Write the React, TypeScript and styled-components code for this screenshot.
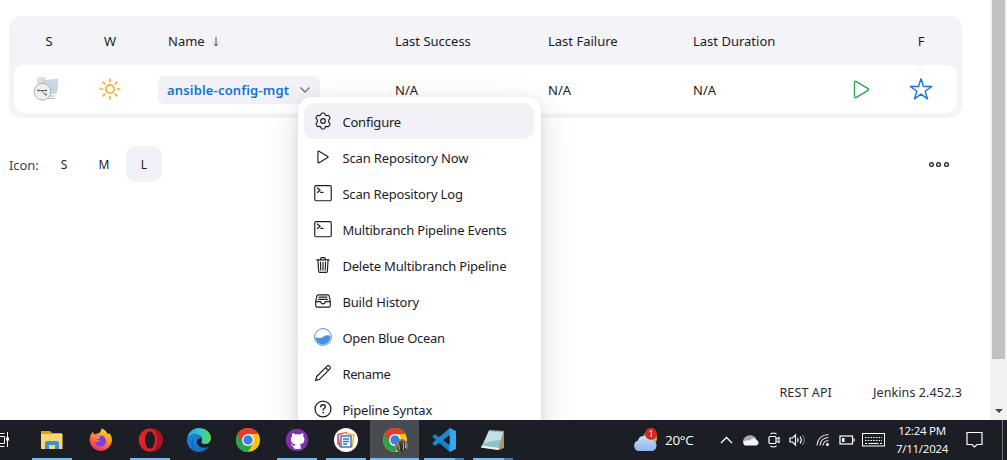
import React from "react";
import styled, { createGlobalStyle } from "styled-components";

const Global = createGlobalStyle`
  * { box-sizing: border-box; }
  body { margin: 0; background: #fff; overflow: hidden; }
  svg { display: block; flex: none; }
`;

const Screen = styled.div`
  width: 1007px;
  height: 460px;
  display: flex;
  flex-direction: column;
  font-family: "Noto Sans", "Open Sans", sans-serif;
  font-size: 13px;
  color: #1c1c27;
`;

const Viewport = styled.div`
  position: relative;
  height: 420px;
  display: flex;
  overflow: hidden;
`;

const Page = styled.main`
  width: 990px;
  padding: 16px 28px 0 9px;
  display: flex;
  flex-direction: column;
`;

const Label = styled.span<{ $ls?: number }>`
  letter-spacing: ${(p) => p.$ls ?? 0}px;
  white-space: nowrap;
`;

const Table = styled.section`
  height: 102px;
  padding: 0 5px 5px;
  border-radius: 13px;
  background: #f3f3f8;
`;

const Row = styled.div`
  display: grid;
  grid-template-columns: 70px 52px 259px 153px 145px 138px 60px 60px;
  align-items: center;
`;

const HeadRow = styled(Row)`
  height: 49px;
  padding-top: 1px;
`;

const JobRow = styled(Row)`
  height: 48px;
  background: #fff;
  border-radius: 10px;
`;

const Cell = styled.div<{ $center?: boolean; $pad?: number; $drop?: number }>`
  display: flex;
  align-items: center;
  justify-content: ${(p) => (p.$center ? "center" : "flex-start")};
  padding-left: ${(p) => p.$pad ?? 0}px;
  padding-top: ${(p) => p.$drop ?? 0}px;
`;

const SortArrow = styled.svg`
  margin: 1px 0 0 8px;
`;

const JobLink = styled.a`
  display: flex;
  align-items: center;
  width: 162px;
  height: 28px;
  padding: 0 9px 0 9px;
  justify-content: space-between;
  border-radius: 6px;
  background: #f1f1f7;
  color: #1272dc;
  font-weight: 600;
`;

const SizeBar = styled.div`
  margin-top: 28px;
  height: 36px;
  display: flex;
  align-items: center;
`;

const Caption = styled.span`
  width: 37px;
  color: #40404c;
  white-space: nowrap;
  letter-spacing: -0.1px;
  padding-top: 1px;
`;

const SizeButton = styled.span<{ $active?: boolean }>`
  width: 36px;
  height: 36px;
  margin-right: 4px;
  display: flex;
  align-items: center;
  justify-content: center;
  border-radius: 10px;
  font-size: 12px;
  background: ${(p) => (p.$active ? "#f1f1f7" : "transparent")};
`;

const More = styled.div`
  margin-left: auto;
  margin-right: 12px;
`;

const Footer = styled.footer`
  margin-top: auto;
  height: 54px;
  padding-top: 18px;
  display: flex;
  justify-content: flex-end;
  gap: 41px;
  font-size: 12.5px;
  color: #2a2a35;
`;

const Scrollbar = styled.div`
  width: 17px;
  height: 420px;
  background: #f1f1f1;
  display: flex;
  flex-direction: column;
  align-items: center;
`;

const Thumb = styled.div`
  width: 13px;
  height: 359px;
  background: #c1c1c1;
`;

const ArrowDown = styled.div`
  margin-top: 50px;
  border: 4px solid transparent;
  border-top-color: #444;
  border-bottom: 0;
`;

const Menu = styled.nav`
  position: absolute;
  left: 298px;
  top: 97px;
  width: 243px;
  height: 372px;
  padding: 6px 7px 6px 6px;
  border-radius: 14px;
  background: #fff;
  box-shadow: 0 10px 34px rgba(0, 0, 15, 0.14), 0 2px 8px rgba(0, 0, 15, 0.08);
`;

const MenuItem = styled.a<{ $active?: boolean }>`
  height: 36px;
  padding-left: 10px;
  display: flex;
  align-items: center;
  gap: 10.4px;
  border-radius: 10px;
  background: ${(p) => (p.$active ? "#f1f1f7" : "transparent")};
  ${Label} { padding-top: 2px; }
`;

const Taskbar = styled.div`
  height: 40px;
  display: flex;
  background: #1b1f25;
  color: #fff;
  overflow: hidden;
`;

const TaskView = styled.div`
  width: 27px;
  display: flex;
  align-items: center;
`;

const TaskButton = styled.div<{ $active?: boolean }>`
  width: 49px;
  height: 40px;
  display: flex;
  flex-direction: column;
  align-items: center;
  justify-content: space-between;
  padding-top: 7px;
  background: ${(p) => (p.$active ? "#484c51" : "transparent")};
`;

const Underline = styled.div<{ $w: number; $split?: boolean }>`
  width: ${(p) => p.$w}px;
  height: 2px;
  background: ${(p) =>
    p.$split ? "linear-gradient(90deg, #76b9ed 78%, #4a7ba6 78%)" : "#76b9ed"};
`;

const Tray = styled.div`
  margin-left: auto;
  width: 375px;
  display: flex;
  align-items: center;
  font-family: "Open Sans", "Noto Sans", sans-serif;
`;

const TraySlot = styled.div<{ $w: number; $pad?: number }>`
  width: ${(p) => p.$w}px;
  padding-left: ${(p) => p.$pad ?? 0}px;
  display: flex;
  align-items: center;
  flex: none;
`;

const Temperature = styled.span`
  font-size: 13.5px;
  letter-spacing: -0.3px;
  white-space: nowrap;
`;

const Clock = styled.div`
  width: 54px;
  height: 36px;
  display: flex;
  flex-direction: column;
  align-items: center;
  font-size: 11.5px;
  line-height: 17.5px;
  white-space: nowrap;
  letter-spacing: -0.25px;
`;

const ShowDesktop = styled.div`
  margin-left: auto;
  width: 5px;
  height: 40px;
  border-left: 1px solid #777b80;
`;

const line = {
  fill: "none",
  stroke: "currentColor",
  strokeLinecap: "round" as const,
  strokeLinejoin: "round" as const,
};

const MenuSvg = ({ children }: { children: React.ReactNode }) => (
  <svg width="18" height="18" viewBox="0 0 512 512" {...line} strokeWidth="33">
    {children}
  </svg>
);

const Gear = () => (
  <MenuSvg>
    <path d="M200 66Q206 28 228 28h56q22 0 28 38 6 20 24 30 20 10 38 4 36-14 48 6l30 52q12 20-16 44-18 14-18 34v40q0 20 18 34 28 24 16 44l-30 52q-12 20-48 6-18-6-38 4-18 10-24 30-6 38-28 38h-56q-22 0-28-38-6-20-24-30-20-10-38-4-36 14-48-6l-30-52q-12-20 16-44 18-14 18-34v-40q0-20-18-34-28-24-16-44l30-52q12-20 48-6 18 6 38-4 18-10 24-30z" />
    <circle cx="256" cy="256" r="66" />
  </MenuSvg>
);

const PlayPath = "M112 111v290c0 17.44 17 28.52 31 20.16l247.9-148.37c12.12-7.25 12.12-26.33 0-33.58L143 90.84c-14-8.36-31 2.72-31 20.16z";
const Play = () => (
  <MenuSvg><path d={PlayPath} /></MenuSvg>
);

const Terminal = () => (
  <MenuSvg>
    <rect x="22" y="46" width="468" height="430" rx="34" />
    <path d="M96 112l80 64-80 64M192 240h64" />
  </MenuSvg>
);

const Trash = () => (
  <MenuSvg>
    <path d="M112 112l20 320c.95 18.49 14.4 32 32 32h184c17.67 0 30.87-13.51 32-32l20-320M80 112h352M192 112V72a23.93 23.93 0 0 1 24-24h80a23.93 23.93 0 0 1 24 24v40M256 176v224M184 176l8 224M328 176l-8 224" />
  </MenuSvg>
);

const Archive = () => (
  <MenuSvg>
    <path d="M384 80H128c-26 0-43 14-48 40L48 272v112a48 48 0 0 0 48 48h320a48 48 0 0 0 48-48V272l-32-152c-5-27-23-40-48-40zM48 272h144M320 272h144M192 272a64 64 0 0 0 128 0M144 144h224M128 208h256" />
  </MenuSvg>
);

const BlueOcean = () => (
  <svg width="18" height="18" viewBox="0 0 18 18">
    <circle cx="9" cy="9" r="8.4" fill="#fff" stroke="#4a90e2" strokeWidth="1" />
    <path d="M1.6 9.2c2.2.2 3.6 1.3 5.7.6C9.5 9 10.500 7.300 13.300 7.300c1.500 0 2.200.5 3 .8C16.800 13 13.400 16.500 9 16.500S1.600 13 1.600 9.200z" fill="#4a90e2" />
  </svg>
);

const Pencil = () => (
  <MenuSvg>
    <path d="M44 468l32-112L366 66c22-22 50-28 72-6l14 14c22 22 16 50-6 72L156 436zM328 104l80 80" />
  </MenuSvg>
);

const Help = () => (
  <MenuSvg>
    <circle cx="256" cy="256" r="226" strokeWidth="36" />
    <path d="M190 196s2-60 68-60c40 0 64 24 64 54 0 52-64 50-64 98" strokeWidth="38" />
    <circle cx="257" cy="360" r="12" fill="currentColor" strokeWidth="24" />
  </MenuSvg>
);

const Sun = () => (
  <svg width="22" height="22" viewBox="0 0 22 22" fill="none" stroke="#f7b02e" strokeWidth="1.7" strokeLinecap="round">
    <circle cx="11" cy="11" r="4.2" />
    <path d="M11 1.200v2.400M11 18.400v2.400M1.200 11h2.400M18.400 11h2.400M4.100 4.100l1.700 1.700M16.200 16.200l1.700 1.700M4.100 17.900l1.700-1.700M16.200 5.800l1.700-1.700" />
  </svg>
);

const ProjectIcon = () => (
  <svg width="26" height="26" viewBox="0 0 26 26">
    <path d="M4 1h9v3h11v14H4z" fill="#dfe1e2" />
    <path d="M9 5l16-2-1 13-15 2z" fill="#cdd9e3" stroke="#c2cbd2" strokeWidth=".6" />
    <path d="M11 7l12-1-1 9-11 1z" fill="#c5d7e6" />
    <path d="M16 20h6M15 22.500h7" stroke="#b4b8ba" strokeWidth="1.2" />
    <circle cx="9.500" cy="15.700" r="8.300" fill="#f1f1ef" stroke="#a5a6a5" strokeWidth=".9" />
    <path d="M5 14.500h8M8 14.500c2 0 2 4 5 4" stroke="#656866" strokeWidth="1" fill="none" />
    <circle cx="5.300" cy="14.500" r="1.100" fill="#656866" />
    <circle cx="13" cy="14.500" r="1" fill="#656866" />
    <circle cx="13" cy="18.500" r="1" fill="#656866" />
  </svg>
);

const Chrome = () => (
  <g>
    <circle cx="12" cy="12" r="12" fill="#fbc116" />
    <path d="M12 12L1.610 6A12 12 0 0 0 12 24l5.200-9z" fill="#2ba24c" />
    <path d="M12 12V6h10.390A12 12 0 0 0 1.610 6l5.200 9z" fill="#e33b2e" />
    <circle cx="12" cy="12" r="6" fill="#fff" />
    <circle cx="12" cy="12" r="4.700" fill="#3b7ded" />
  </g>
);

const Icon24 = ({ children }: { children: React.ReactNode }) => (
  <svg width="26" height="26" viewBox="-1 -1 26 26">{children}</svg>
);

const Explorer = () => (
  <Icon24>
    <path d="M1 3h9l2 2h10v5H1z" fill="#d9a025" />
    <path d="M1 6h21.500v15H1z" fill="#fbd774" />
    <path d="M5 21v-6q0-2 2-2h10q2 0 2 2v6h-4v-4H9v4z" fill="#3f93cc" />
  </Icon24>
);

const Firefox = () => (
  <Icon24>
    <defs><linearGradient id="fx" x1=".8" y1="0" x2=".3" y2="1"><stop stopColor="#ffe03a" /><stop offset=".45" stopColor="#ff9128" /><stop offset="1" stopColor="#f5246c" /></linearGradient></defs>
    <path d="M2 6.500L3.500 4l2 2.500L10 5c1-.8 2-1.500 2.500-4.500C16 1.500 18 4 18.500 6c1 0 1.500-1 1.500-1 2 2 3 4.500 3 7.500A11.200 11.200 0 0 1 .7 13C.7 10 1 8 2 6.500z" fill="url(#fx)" />
    <path d="M6 9c2-2 4-1 5-1 3-1 6 1.500 6 5a5.500 5.500 0 0 1-11 .5c2 1 4 .5 5-1-2 0-2-1-5-3.500z" fill="#7b3fe0" />
    <path d="M6 9c2-1 4 0 5-1l-1 3z" fill="#ffb637" />
  </Icon24>
);

const Opera = () => (
  <Icon24>
    <ellipse cx="12" cy="12" rx="11.300" ry="11.500" fill="#e0202c" />
    <path d="M14 .8a11 11.200 0 0 1 0 22.400c7-4 7-18 0-22.400z" fill="#a8141f" />
    <ellipse cx="12" cy="12" rx="5" ry="8.800" fill="#1b1f25" />
  </Icon24>
);

const Edge = () => (
  <Icon24>
    <defs>
      <linearGradient id="edgeTop" x1="0" x2="1"><stop stopColor="#2aa6e4" /><stop offset=".5" stopColor="#31c3d8" /><stop offset="1" stopColor="#62d54b" /></linearGradient>
      <linearGradient id="edgeBase" x1="0" y1="0" x2="1" y2="1"><stop stopColor="#188fdd" /><stop offset="1" stopColor="#1565b5" /></linearGradient>
    </defs>
    <path d="M0 11C1 4 6 0 12 0s12 4 12 10c0 4-3 6-6 6-3 0-4-1.200-3.500-2.200C17 9 12 6.500 8 6.500c-4 0-7 2-8 4.500z" fill="url(#edgeTop)" />
    <path d="M0 11C2 7.500 5 6.500 8 6.500c4 0 6 2 6 4-4-.5-5 3-3.500 5.500 2 4 7 5 11.500 2.500C19 22.500 15.500 24 12 24 5 24-.5 18 0 11z" fill="url(#edgeBase)" />
    <path d="M8 9C5 12 5 20 11 23.500 3 22 2 12 8 9z" fill="#126ac0" />
  </Icon24>
);

const Github = () => (
  <Icon24>
    <circle cx="12" cy="12" r="11.200" fill="#8031a7" />
    <path d="M9.800 21v-3.200c-3 .6-3.600-1.400-3.600-1.400M9.800 21v-3c0-.8.3-1.400.7-1.700C7.800 16 6 14.800 6 11.300c0-1.200.5-2.200 1.200-3-.2-.6-.4-1.800.1-3.100 0 0 1.100-.2 3.100 1.200a10 10 0 0 1 4.600 0c2-1.400 3.100-1.200 3.100-1.200.5 1.300.3 2.500.1 3.100.7.800 1.200 1.800 1.200 3 0 3.500-1.800 4.700-4.500 5 .5.400.8 1.100.8 2.200V21z" fill="#fff" />
    <path d="M6 16.300c1.200.2 1.200 2 3.500 1.800" stroke="#fff" fill="none" />
  </Icon24>
);

const Docs = () => (
  <Icon24>
    <circle cx="12" cy="12" r="12" fill="#fff" />
    <g fill="none" strokeWidth="1.600">
      <path d="M4 17V6.500l9-2" stroke="#e35542" />
      <path d="M6 19L4 9" stroke="#e35542" />
      <path d="M18 19l2-12-11-2" stroke="#f1b638" />
    </g>
    <rect x="7" y="8" width="10" height="11" fill="#fff" stroke="#3779c8" strokeWidth="1.500" />
    <path d="M9 11h6M9 13.500h6M9 16h4" stroke="#3779c8" strokeWidth="1.300" />
  </Icon24>
);

const ChromeProfile = () => (
  <Icon24>
    <Chrome />
    <circle cx="18.500" cy="17.500" r="6.500" fill="#7e7a70" />
    <path d="M14.500 22c0-6 1-8 3.500-9s5 3 5 9q-4 4-8.500 0z" fill="#34322f" />
    <path d="M15.500 15l1 7M20.500 15v7M22.500 16v4" stroke="#b8b1a3" strokeWidth="1" />
    <circle cx="18.300" cy="14.500" r="1.800" fill="#594a40" />
  </Icon24>
);

const VsCode = () => (
  <Icon24>
    <path d="M.5 8L3 6.200 24 20l-6 4L1 9.500z" fill="#1b82c8" />
    <path d="M.5 16L3 17.800 22 5l-4-5L1 14.500z" fill="#1b8bd0" />
    <path d="M17.500 0L24 3v18l-6.500 3z" fill="#35a8ee" />
    <path d="M17.500 7v10L11 12z" fill="#1b1f25" />
  </Icon24>
);

const Notepad = () => (
  <Icon24>
    <path d="M8 2l15 1v17l-5 2z" fill="#ad9569" />
    <path d="M8 2.500l14 1L17.500 22 0 19.500z" fill="#8cc3cb" />
    <path d="M8 2.500l14 1-2 8L3 15z" fill="#c3e0e3" />
    <path d="M0 19.500L17.500 22l.5-2L1 17.500z" fill="#edf4f3" />
    <path d="M8 2.500l14 1" stroke="#767c7c" strokeWidth="1.400" strokeDasharray="1 1" />
  </Icon24>
);

const apps: { icon: React.ReactNode; w?: number; active?: boolean; split?: boolean }[] = [
  { icon: <Explorer />, w: 40 },
  { icon: <Firefox /> },
  { icon: <Opera />, w: 40 },
  { icon: <Edge /> },
  { icon: <Icon24><Chrome /></Icon24> },
  { icon: <Github />, w: 40 },
  { icon: <Docs />, w: 40 },
  { icon: <ChromeProfile />, w: 49, active: true },
  { icon: <VsCode />, w: 40, split: true },
  { icon: <Notepad />, w: 40, split: true },
];

const menu: { icon: React.ReactNode; text: string; ls: number }[] = [
  { icon: <Gear />, text: "Configure", ls: -0.2 },
  { icon: <Play />, text: "Scan Repository Now", ls: -0.14 },
  { icon: <Terminal />, text: "Scan Repository Log", ls: -0.17 },
  { icon: <Terminal />, text: "Multibranch Pipeline Events", ls: -0.2 },
  { icon: <Trash />, text: "Delete Multibranch Pipeline", ls: -0.18 },
  { icon: <Archive />, text: "Build History", ls: -0.13 },
  { icon: <BlueOcean />, text: "Open Blue Ocean", ls: -0.27 },
  { icon: <Pencil />, text: "Rename", ls: -0.35 },
  { icon: <Help />, text: "Pipeline Syntax", ls: -0.2 },
];

export default function App() {
  return (
    <Screen>
      <Global />
      <Viewport>
        <Page>
          <Table>
            <HeadRow>
              <Cell $center>S</Cell>
              <Cell $center>W</Cell>
              <Cell $pad={32}>
                <Label>Name</Label>
                <SortArrow width="6" height="10" viewBox="0 0 6 10" fill="none" stroke="#4c4c57" strokeWidth="1">
                  <path d="M3 0v9M1 6.800l2 2.200 2-2.200" />
                </SortArrow>
              </Cell>
              <Cell><Label>Last Success</Label></Cell>
              <Cell><Label>Last Failure</Label></Cell>
              <Cell><Label>Last Duration</Label></Cell>
              <Cell />
              <Cell $center>F</Cell>
            </HeadRow>
            <JobRow>
              <Cell $pad={19}><ProjectIcon /></Cell>
              <Cell $center><Sun /></Cell>
              <Cell $pad={22} $drop={2}>
                <JobLink>
                  <Label $ls={0.17}>ansible-config-mgt</Label>
                  <svg width="12" height="8" viewBox="0 0 12 8" fill="none" stroke="#73737e" strokeWidth="1.300"><path d="M1.500 1.500L6 6l4.500-4.500" /></svg>
                </JobLink>
              </Cell>
              <Cell $drop={2}>N/A</Cell>
              <Cell $drop={2}>N/A</Cell>
              <Cell $drop={2}>N/A</Cell>
              <Cell $center>
                <svg width="25" height="25" viewBox="0 0 512 512" fill="none" stroke="#2ba350" strokeWidth="28"><path d={PlayPath} /></svg>
              </Cell>
              <Cell $center>
                <svg width="24" height="24" viewBox="0 0 24 24" fill="none" stroke="#1675d8" strokeWidth="1.400" strokeLinejoin="round"><path d="M12 1.800l2.500 7.700h8.200l-6.600 4.700 2.500 7.700-6.600-4.800-6.600 4.800 2.500-7.700-6.600-4.700h8.200z" /></svg>
              </Cell>
            </JobRow>
          </Table>
          <SizeBar>
            <Caption>Icon:</Caption>
            <SizeButton>S</SizeButton>
            <SizeButton>M</SizeButton>
            <SizeButton $active>L</SizeButton>
            <More>
              <svg width="22" height="6" viewBox="0 0 22 6" fill="none" stroke="#14141f" strokeWidth="1.200"><circle cx="3.500" cy="3.500" r="1.900" /><circle cx="10.500" cy="3.500" r="1.900" /><circle cx="18.500" cy="3.500" r="1.900" /></svg>
            </More>
          </SizeBar>
          <Footer>
            <Label $ls={0.12}>REST API</Label>
            <Label $ls={0.1}>Jenkins 2.452.3</Label>
          </Footer>
        </Page>
        <Scrollbar>
          <Thumb />
          <ArrowDown />
        </Scrollbar>
        <Menu>
          {menu.map((m, i) => (
            <MenuItem key={m.text} $active={i === 0}>
              {m.icon}
              <Label $ls={m.ls}>{m.text}</Label>
            </MenuItem>
          ))}
        </Menu>
      </Viewport>
      <Taskbar>
        <TaskView>
          <svg width="10" height="18" viewBox="0 0 10 18" fill="none" stroke="#fff" strokeWidth="1"><path d="M0 5.500h4.500v7H0M0 2.500h4.500M0 15.500h4.500M7.500 1v15" /><path d="M6 6.500h3v3H6z" fill="#fff" stroke="none" /></svg>
        </TaskView>
        {apps.map((a, i) => (
          <TaskButton key={i} $active={a.active}>
            {a.icon}
            {a.w && <Underline $w={a.w} $split={a.split} />}
          </TaskButton>
        ))}
        <Tray>
          <TraySlot $w={33}>
            <svg width="28" height="26" viewBox="0 0 28 26">
              <defs><linearGradient id="cloud" x1="0" y1="0" x2="0" y2="1"><stop stopColor="#c9ddfb" /><stop offset="1" stopColor="#8eb4ee" /></linearGradient></defs>
              <circle cx="18" cy="11" r="7" fill="#e9a528" />
              <path d="M6 24a5.500 5.500 0 0 1 0-10.500C7 8 15 7.500 17 12.500c4 0 7.500 2 7.500 6 0 3-2 5.500-5 5.500z" fill="url(#cloud)" />
              <circle cx="19" cy="6.800" r="6" fill="#cf2a1f" />
              <text x="19" y="10.200" textAnchor="middle" fontSize="9" fill="#fff">1</text>
            </svg>
          </TraySlot>
          <TraySlot $w={55}><Temperature>20°C</Temperature></TraySlot>
          <TraySlot $w={21}>
            <svg width="13" height="8" viewBox="0 0 13 8" fill="none" stroke="#fff" strokeWidth="1.300"><path d="M1 7l5.500-5.500L12 7" /></svg>
          </TraySlot>
          <TraySlot $w={27} $pad={1}>
            <svg width="17" height="12" viewBox="0 0 17 12"><path d="M1 9C0 4 6 0 10 1.500c3 .5 4 3 4 4z" fill="#a5a7a9" /><path d="M3 11.500a3 3 0 0 1-1-4.500c3-.5 4-1 6-.5 2-3 6-3 6.500-.5 3 1 2.500 5.500-.5 5.500z" fill="#f4f4f4" /></svg>
          </TraySlot>
          <TraySlot $w={21}>
            <svg width="12" height="16" viewBox="0 0 12 16" fill="none" stroke="#fff" strokeWidth="1.200"><rect x="1" y="4.500" width="7" height="7" rx="1" /><path d="M8.500 7l2.500-1.500v5L8.500 9M2.500 2q3-2 6 0M2.500 14q3 2 6 0" /></svg>
          </TraySlot>
          <TraySlot $w={27}>
            <svg width="17" height="14" viewBox="0 0 17 14" fill="none" stroke="#fff" strokeWidth="1.200"><path d="M1 5h2.500L6.500 2v10l-3-3H1zM8.500 5q1.500 2 0 4M11 3.500q2.500 3.500 0 7" /><path d="M13.500 2q3.500 5 0 10" stroke="#777" /></svg>
          </TraySlot>
          <TraySlot $w={22}>
            <svg width="14" height="14" viewBox="0 0 14 14" fill="none" stroke="#ddd" strokeWidth="1.200"><path d="M1 12.500Q2 2 12.500 1.500M4 12.500Q4.500 5 12.500 4.500M7 12.500Q7.500 8 12.500 7.500" /><circle cx="11.500" cy="11.500" r="1.500" fill="#fff" stroke="none" /></svg>
          </TraySlot>
          <TraySlot $w={23} $pad={1}>
            <svg width="16" height="10" viewBox="0 0 16 10" fill="none" stroke="#fff" strokeWidth="1.200"><rect x="1" y="1" width="12.500" height="8" /><path d="M15 3.500v3" /><path d="M3 3h2.500v4H3z" fill="#fff" stroke="none" /></svg>
          </TraySlot>
          <TraySlot $w={34} $pad={1}>
            <svg width="23" height="14" viewBox="0 0 23 14" fill="none" stroke="#fff"><rect x=".5" y=".5" width="22" height="12.500" /><path d="M3 4.500h17M3 7.500h17" strokeDasharray="1.500 1.200" /><path d="M3 10.500h2M6.500 10.500h10M18 10.500h2" /></svg>
          </TraySlot>
          <Clock><span>12:24 PM</span><span>7/11/2024</span></Clock>
          <TraySlot $w={36} $pad={17}>
            <svg width="18" height="18" viewBox="0 0 18 18" fill="none" stroke="#fff" strokeWidth="1.200"><path d="M1 1.500h15v12h-5l-2.500 2.500-2.500-2.500H1z" /></svg>
          </TraySlot>
          <ShowDesktop />
        </Tray>
      </Taskbar>
    </Screen>
  );
}
